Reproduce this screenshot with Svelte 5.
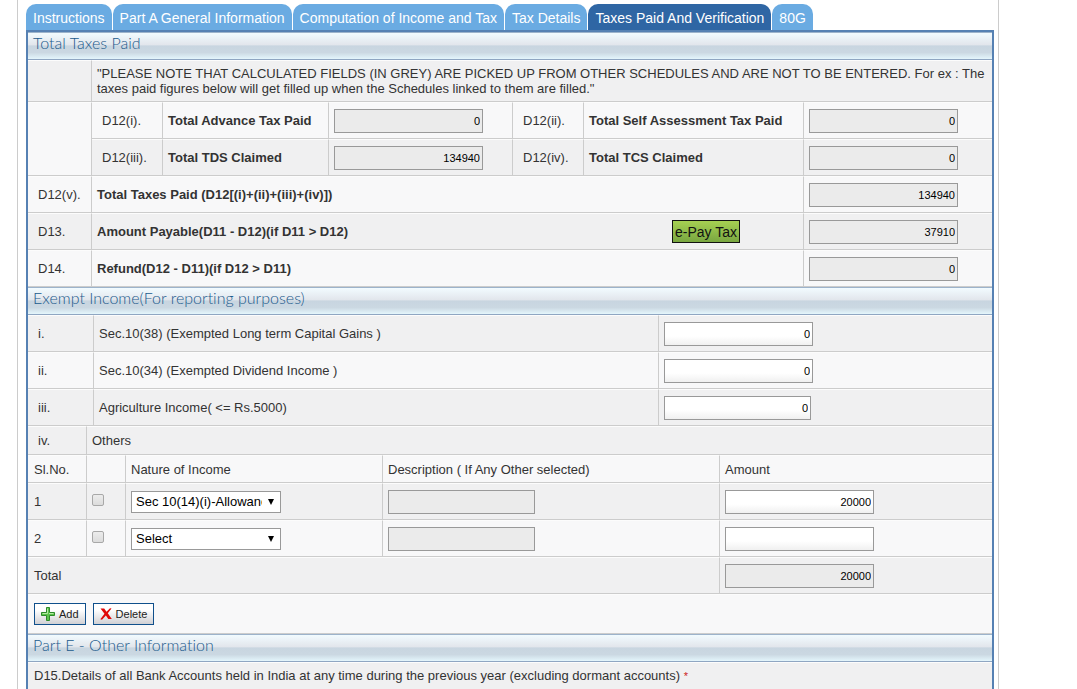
<script lang="ts">
  const tabs = [
    'Instructions',
    'Part A General Information',
    'Computation of Income and Tax',
    'Tax Details',
    'Taxes Paid And Verification',
    '80G'
  ];
  let active = $state('Taxes Paid And Verification');

  let exempt = $state([
    { no: 'i.', label: 'Sec.10(38) (Exempted Long term Capital Gains )', value: '0' },
    { no: 'ii.', label: 'Sec.10(34) (Exempted Dividend Income )', value: '0' },
    { no: 'iii.', label: 'Agriculture Income( <= Rs.5000)', value: '0', short: true }
  ]);

  const natures = ['Select', 'Sec 10(14)(i)-Allowance to meet expenditure'];
  let others = $state([
    { nature: natures[1], checked: false, desc: '', amount: '20000' },
    { nature: natures[0], checked: false, desc: '', amount: '' }
  ]);
  let total = $derived(others.reduce((sum, o) => sum + (Number(o.amount) || 0), 0));

  function addRow() {
    others.push({ nature: natures[0], checked: false, desc: '', amount: '' });
  }

  function deleteRows() {
    others = others.filter((o) => !o.checked);
  }
</script>

<div class="page">
  <nav class="tabs">
    {#each tabs as tab}
      <button type="button" class="tab" class:active={tab === active} onclick={() => (active = tab)}>{tab}</button>
    {/each}
  </nav>

  <main class="panel">
    <h2>Total Taxes Paid</h2>
    <table>
      <colgroup>
        <col style="width: 64px" /><col style="width: 71px" /><col style="width: 166px" />
        <col style="width: 184px" /><col style="width: 71px" /><col style="width: 220px" /><col />
      </colgroup>
      <tbody>
        <tr class="note">
          <td></td>
          <td colspan="6">"PLEASE NOTE THAT CALCULATED FIELDS (IN GREY) ARE PICKED UP FROM OTHER SCHEDULES AND ARE NOT TO BE ENTERED. For ex : The taxes paid figures below will get filled up when the Schedules linked to them are filled."</td>
        </tr>
        <tr class="light">
          <td rowspan="2"></td>
          <td class="no">D12(i).</td>
          <td><label for="advance">Total Advance Tax Paid</label></td>
          <td><input id="advance" class="num" value="0" readonly /></td>
          <td class="no">D12(ii).</td>
          <td><label for="self">Total Self Assessment Tax Paid</label></td>
          <td><input id="self" class="num" value="0" readonly /></td>
        </tr>
        <tr>
          <td class="no">D12(iii).</td>
          <td><label for="tds">Total TDS Claimed</label></td>
          <td><input id="tds" class="num" value="134940" readonly /></td>
          <td class="no">D12(iv).</td>
          <td><label for="tcs">Total TCS Claimed</label></td>
          <td><input id="tcs" class="num" value="0" readonly /></td>
        </tr>
        <tr class="light">
          <td class="no">D12(v).</td>
          <td colspan="5"><label for="paid">Total Taxes Paid (D12[(i)+(ii)+(iii)+(iv)])</label></td>
          <td><input id="paid" class="num" value="134940" readonly /></td>
        </tr>
        <tr>
          <td class="no">D13.</td>
          <td colspan="5">
            <div class="payable">
              <label for="payable">Amount Payable(D11 - D12)(if D11 &gt; D12)</label>
              <button type="button" class="epay">e-Pay Tax</button>
            </div>
          </td>
          <td><input id="payable" class="num" value="37910" readonly /></td>
        </tr>
        <tr class="light">
          <td class="no">D14.</td>
          <td colspan="5"><label for="refund">Refund(D12 - D11)(if D12 &gt; D11)</label></td>
          <td><input id="refund" class="num" value="0" readonly /></td>
        </tr>
      </tbody>
    </table>

    <h2>Exempt Income(For reporting purposes)</h2>
    <table class="plain">
      <colgroup>
        <col style="width: 66px" /><col style="width: 565px" /><col />
      </colgroup>
      <tbody>
        {#each exempt as row, i}
          <tr class:light={i % 2 === 1}>
            <td class="no">{row.no}</td>
            <td><label for="exempt-{i}">{row.label}</label></td>
            <td><input id="exempt-{i}" class="num" class:short={row.short} bind:value={row.value} /></td>
          </tr>
        {/each}
      </tbody>
    </table>

    <table class="plain others">
      <colgroup>
        <col style="width: 59px" /><col style="width: 39px" /><col style="width: 257px" />
        <col style="width: 337px" /><col />
      </colgroup>
      <tbody>
        <tr class="low">
          <td class="no">iv.</td>
          <td colspan="4">Others</td>
        </tr>
        <tr class="head light">
          <th>Sl.No.</th>
          <th></th>
          <th>Nature of Income</th>
          <th>Description ( If Any Other selected)</th>
          <th>Amount</th>
        </tr>
        {#each others as row, i}
          <tr class:light={i % 2 === 1}>
            <td>{i + 1}</td>
            <td><input type="checkbox" aria-label="Select row {i + 1}" bind:checked={row.checked} /></td>
            <td>
              <div class="select">
                <select aria-label="Nature of Income" bind:value={row.nature}>
                  {#each natures as n}
                    <option value={n}>{n}</option>
                  {/each}
                </select>
              </div>
            </td>
            <td><input class="num short" aria-label="Description" value={row.desc} readonly /></td>
            <td><input class="num" aria-label="Amount" bind:value={row.amount} /></td>
          </tr>
        {/each}
        <tr>
          <td colspan="4"><label for="total">Total</label></td>
          <td><input id="total" class="num" value={total} readonly /></td>
        </tr>
        <tr class="light buttons">
          <td colspan="5">
            <div class="actions">
              <button type="button" class="action" onclick={addRow}>
                <svg width="14" height="14" viewBox="0 0 14 14" aria-hidden="true">
                  <path d="M5.500.5h3v5h5v3h-5v5h-3v-5h-5v-3h5z" fill="#5cc24c" stroke="#2c8a2a" />
                  <path d="M6.500 1.500v5h-5M8 6.500h4.500" fill="none" stroke="#b4eaa4" />
                </svg>
                Add
              </button>
              <button type="button" class="action" onclick={deleteRows}>
                <svg width="12" height="12" viewBox="0 0 12 12" aria-hidden="true">
                  <path d="M.5.500h3.700l2.300 3.300L10 .3l1.500.3-3.700 4.600L11.800 11H8.300L5.900 7.500 2 11.700l-1.700-.5L4.500 5.700z" fill="#e00808" />
                </svg>
                Delete
              </button>
            </div>
          </td>
        </tr>
      </tbody>
    </table>

    <h2>Part E - Other Information</h2>
    <p>D15.Details of all Bank Accounts held in India at any time during the previous year (excluding dormant accounts) <span class="required">*</span></p>
  </main>
</div>

<style>
  :global(body) { margin: 0; background: #fff; }
  .page {
    box-sizing: border-box; min-height: 100vh; margin: 0 78px 0 17px; padding: 4px 4px 0 8px;
    border-left: 1px solid #ccc; border-right: 1px solid #ccc;
    font: 13px/15px "Liberation Sans", Arial, sans-serif; color: #333;
  }
  button, input, select { font-family: inherit; margin: 0; box-sizing: border-box; }

  .tabs { display: flex; gap: 1px; }
  .tab {
    height: 26px; padding: 2px 7px 0; border: 0; border-radius: 10px 10px 0 0;
    background: #6aabe2; color: #fff; font-size: 14px; line-height: 16px; white-space: nowrap; cursor: pointer;
  }
  .tab.active { background: #2f66a4; }

  .panel { border: 2px solid #5681b3; border-bottom: 0; }
  h2 {
    box-sizing: border-box; height: 28px; margin: 0; padding: 0 5px;
    border-top: 1px solid #9db3cb; border-bottom: 1px solid #8fa6c2;
    background: linear-gradient(#f2fbff, #e2e6ec 45%, #c8d5e0 50%, #cbd8e2 75%, #e4f6fc);
    font: 300 16px/20px "Century Gothic", "URW Gothic", Lato, sans-serif; color: #1b5a8c;
    font-variant-ligatures: none;
  }

  table { width: 100%; table-layout: fixed; border-collapse: separate; border-spacing: 0; }
  td, th {
    box-sizing: border-box; height: 37px; padding: 0 5px; vertical-align: middle; text-align: left;
    border-top: 1px solid #fcfcfc; border-right: 1px solid #ccc; border-bottom: 1px solid #ccc;
    background: #f0f0f1; font-weight: normal;
  }
  td:last-child, th:last-child { border-right: 0; }
  .light td, .light th { background: #f8f8f9; }
  .note td { height: 42px; }
  .low td { height: 29px; }
  .head th { height: 28px; }
  .buttons td { height: 40px; }
  .others td:first-child, .others th:first-child { padding-left: 6px; }
  td.no, .others td.no { padding-left: 10px; }
  label { font-weight: bold; }
  .plain label { font-weight: normal; }

  .num {
    display: block; width: 149px; height: 24px; padding: 0 2px; border: 1px solid #999;
    background: linear-gradient(#fff 60%, #f0f0f0); color: #000; font-size: 11px; text-align: right;
  }
  .num:read-only { background: #ebebeb; }
  .num.short { width: 147px; }

  input[type='checkbox'] {
    appearance: none; display: block; width: 12px; height: 12px; margin-bottom: 4px;
    border: 1px solid #a8a8a8; border-radius: 2px; background: linear-gradient(#ececec, #dcdcdc);
  }
  input[type='checkbox']:checked { background: #5681b3; }

  .select { position: relative; width: 150px; }
  .select::after {
    content: ''; position: absolute; right: 7px; top: 8px; pointer-events: none;
    border: 3px solid transparent; border-top: 6px solid #000; border-bottom: 0;
  }
  select {
    appearance: none; display: block; width: 100%; height: 22px; padding: 0 18px 0 4px;
    border: 1px solid #999; border-radius: 0; background: #fff; color: #000; font-size: 13px;
  }

  .payable { display: flex; align-items: center; justify-content: space-between; padding-right: 58px; }
  .epay {
    height: 23px; padding: 0 2px; border: 1px solid #111; cursor: pointer;
    background: linear-gradient(#a6d052, #79a741); color: #111; font-size: 14px;
  }

  .actions { display: flex; gap: 7px; }
  .action {
    display: flex; align-items: center; gap: 4px; height: 22px; padding: 0 6px;
    border: 1px solid #10508c; background: linear-gradient(#fff 30%, #d0d0d4); color: #222; font-size: 11px; cursor: pointer;
  }

  p { margin: 0; padding: 5px 6px; border-top: 1px solid #fcfcfc; border-bottom: 1px solid #ccc; background: #f0f0f1; }
  .required { color: #c22; font-size: 11px; }
</style>
